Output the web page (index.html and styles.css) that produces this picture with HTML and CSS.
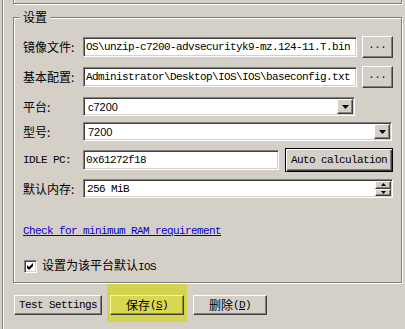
FILE: index.html
```html
<!DOCTYPE html>
<html>
<head>
<meta charset="utf-8">
<title>设置</title>
<link rel="stylesheet" href="styles.css">
</head>
<body>
<div class="frame">
  <div class="frame-inner">
    <div class="upper-box"></div>
    <fieldset class="group">
      <legend class="group-title">设置</legend>

      <div class="form-row row-image">
        <span class="lbl">镜像文件:</span>
        <div class="field file-field"><span class="mono field-text">OS\unzip-c7200-advsecurityk9-mz.124-11.T.bin</span></div>
        <button class="btn browse"><span class="mono">...</span></button>
      </div>

      <div class="form-row row-config">
        <span class="lbl">基本配置:</span>
        <div class="field file-field"><span class="mono field-text">Administrator\Desktop\IOS\IOS\baseconfig.txt</span></div>
        <button class="btn browse"><span class="mono">...</span></button>
      </div>

      <div class="form-row row-platform">
        <span class="lbl">平台:</span>
        <div class="field combo combo-platform">
          <span class="combo-text">c7200</span>
          <span class="btn arrow-btn"><svg width="7" height="4" viewBox="0 0 7 4"><path d="M0 0H7L3.5 4Z" fill="#000"/></svg></span>
        </div>
      </div>

      <div class="form-row row-model">
        <span class="lbl">型号:</span>
        <div class="field combo combo-model">
          <span class="combo-text">7200</span>
          <span class="btn arrow-btn"><svg width="7" height="4" viewBox="0 0 7 4"><path d="M0 0H7L3.5 4Z" fill="#000"/></svg></span>
        </div>
      </div>

      <div class="form-row row-idle">
        <span class="lbl mono">IDLE PC:</span>
        <div class="field idle-field"><span class="mono field-text">0x61272f18</span></div>
        <button class="btn btn-default auto-btn"><span class="mono">Auto calculation</span></button>
      </div>

      <div class="form-row row-ram">
        <span class="lbl">默认内存:</span>
        <div class="field spin">
          <span class="mono field-text spin-text">256 MiB</span>
          <span class="spin-btns">
            <span class="btn spin-btn spin-up"><svg width="5" height="3" viewBox="0 0 5 3"><path d="M2.5 0L5 3H0Z" fill="#000"/></svg></span>
            <span class="btn spin-btn spin-down"><svg width="5" height="3" viewBox="0 0 5 3"><path d="M0 0H5L2.5 3Z" fill="#000"/></svg></span>
          </span>
        </div>
      </div>

      <div class="link-row">
        <a class="link mono" href="#">Check for minimum RAM requirement</a>
      </div>

      <div class="check-row">
        <span class="checkbox"><svg width="7" height="7" viewBox="0 0 7 7"><path d="M0 2L2 4L6 0V3L2 7L0 5Z" fill="#000"/></svg></span>
        <span class="check-label">设置为该平台默认<span class="mono">IOS</span></span>
      </div>
    </fieldset>

    <div class="actions">
      <button class="btn action test-btn"><span class="mono">Test Settings</span></button>
      <div class="highlight">
        <button class="btn action save-btn">保存<span class="mono">(<u>S</u>)</span></button>
      </div>
      <button class="btn action delete-btn">删除<span class="mono">(<u>D</u>)</span></button>
    </div>
  </div>
</div>
</body>
</html>
```
FILE: styles.css
```css
* {
  box-sizing: border-box;
}

html,
body {
  margin: 0;
  padding: 0;
}

body {
  width: 405px;
  height: 329px;
  overflow: hidden;
  background: #d4d0c8;
  color: #000;
  font: 12px/14px "Noto Sans CJK SC", sans-serif;
}

.mono {
  font-family: "Liberation Mono", "Noto Sans CJK SC", monospace;
  font-size: 11px;
  letter-spacing: -0.6px;
}

.frame {
  margin-left: 2px;
  height: 329px;
  border-left: 1px solid #808080;
}

.frame-inner {
  height: 100%;
  border-left: 1px solid #fff;
  padding-left: 9px;
}

.upper-box {
  width: 389px;
  height: 4px;
  border: 1px solid #808080;
  border-top: 0;
  box-shadow: inset 1px 0 #fff, 1px 1px #fff;
}

.group {
  margin: 6px 0 0;
  width: 389px;
  min-inline-size: 0;
  padding: 12px 0 9px 9px;
  border: 1px solid #808080;
  box-shadow: inset 1px 1px #fff, 1px 1px #fff;
}

.group-title {
  padding: 0 3px;
  margin-left: -3px;
  line-height: 14px;
  background: #d4d0c8;
}

.form-row {
  display: flex;
  align-items: center;
}

.lbl {
  flex: none;
  width: 60px;
  white-space: nowrap;
}

.lbl.mono {
  font-size: 11px;
}

.row-image {
  height: 22px;
}

.row-config {
  height: 22px;
  margin-top: 8px;
}

.row-platform {
  height: 19px;
  margin-top: 9px;
}

.row-model {
  height: 19px;
  margin-top: 6px;
}

.row-idle {
  height: 24px;
  margin-top: 7px;
}

.row-ram {
  height: 19px;
  margin-top: 7px;
}

/* sunken edit field */
.field {
  display: flex;
  align-items: center;
  flex: none;
  background: #fff;
  border: 1px solid;
  border-color: #808080 #fff #fff #808080;
  box-shadow: inset 1px 1px #404040, inset -1px -1px #d4d0c8;
  overflow: hidden;
}

.field-text {
  padding-left: 2px;
  white-space: nowrap;
  overflow: hidden;
}

.file-field {
  width: 274px;
  height: 20px;
}

.idle-field {
  width: 196px;
  height: 20px;
}

/* raised button */
.btn {
  display: flex;
  align-items: center;
  justify-content: center;
  flex: none;
  padding: 0;
  margin: 0;
  font: inherit;
  color: #000;
  background: #d4d0c8;
  border: 1px solid;
  border-color: #fff #404040 #404040 #fff;
  box-shadow: inset -1px -1px #808080;
}

.browse {
  width: 31px;
  height: 22px;
  margin-left: 5px;
}

.browse .mono {
  letter-spacing: 0;
  font-size: 10px;
  padding-bottom: 2px;
}

.btn-default {
  border: 1px solid #000;
  box-shadow: inset 1px 1px #fff, inset -1px -1px #404040, inset -2px -2px #808080;
}

.auto-btn {
  width: 108px;
  height: 24px;
  margin-left: 6px;
}

/* combo box */
.combo {
  height: 19px;
  padding: 1px;
  align-items: stretch;
}

.combo-platform {
  width: 272px;
}

.combo-model {
  width: 309px;
}

.combo-text {
  flex: 1;
  display: flex;
  align-items: center;
  padding-left: 3px;
  font: 11px "Liberation Sans", sans-serif;
}

.arrow-btn {
  width: 16px;
}

/* spin box */
.spin {
  width: 310px;
  height: 19px;
  padding: 1px;
  align-items: stretch;
}

.spin-text {
  flex: 1;
  display: flex;
  align-items: center;
  padding-left: 2px;
}

.spin-btns {
  display: flex;
  flex-direction: column;
  width: 16px;
}

.spin-btn {
  flex: 1;
}

.spin-up {
  flex: 8;
}

.spin-down {
  flex: 7;
}

.link-row {
  margin-top: 24px;
  height: 14px;
}

.link {
  color: #0000cc;
  text-decoration: underline;
}

.check-row {
  display: flex;
  align-items: center;
  margin-top: 23px;
  height: 14px;
  padding-left: 1px;
}

.checkbox {
  display: flex;
  align-items: center;
  justify-content: center;
  width: 13px;
  height: 13px;
  background: #fff;
  border: 1px solid;
  border-color: #808080 #fff #fff #808080;
  box-shadow: inset 1px 1px #404040, inset -1px -1px #d4d0c8;
}

.check-label {
  margin-left: 5px;
}

.check-label .mono {
  font-size: 11px;
}

/* bottom buttons */
.actions {
  display: flex;
  align-items: flex-start;
  margin-top: 1px;
  padding-left: 1px;
}

.action {
  height: 20px;
  margin-top: 11px;
}

.test-btn {
  width: 88px;
}

.highlight {
  margin-left: 5px;
  padding: 11px 3px 7px;
  background: #d3d34f;
}

.highlight .save-btn {
  width: 74px;
  margin-top: 0;
  background: #d8d852;
  border-color: #f4f4b0 #404040 #404040 #f4f4b0;
  box-shadow: inset -1px -1px #8a8a30;
}

.delete-btn {
  width: 74px;
  margin-left: 6px;
}
```
